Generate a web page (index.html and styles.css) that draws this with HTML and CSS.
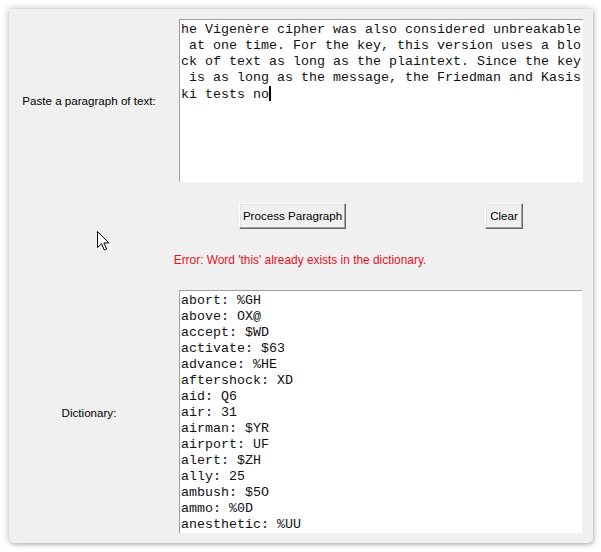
FILE: index.html
```html
<!DOCTYPE html>
<html>
<head>
<meta charset="utf-8">
<link rel="stylesheet" href="styles.css">
</head>
<body>
<div class="window">
  <div class="label label-para">Paste a paragraph of text:</div>
  <div class="textbox para"><div class="line">he Vigenère cipher was also considered unbreakable</div><div class="line"> at one time. For the key, this version uses a blo</div><div class="line">ck of text as long as the plaintext. Since the key</div><div class="line"> is as long as the message, the Friedman and Kasis</div><div class="line">ki tests no<span class="caret"></span></div></div>
  <div class="buttons">
    <button class="btn btn-process">Process Paragraph</button>
    <button class="btn btn-clear">Clear</button>
  </div>
  <div class="error">Error: Word 'this' already exists in the dictionary.</div>
  <div class="label label-dict">Dictionary:</div>
  <div class="textbox dict"><div class="line">abort: %GH</div><div class="line">above: OX@</div><div class="line">accept: $WD</div><div class="line">activate: $63</div><div class="line">advance: %HE</div><div class="line">aftershock: XD</div><div class="line">aid: Q6</div><div class="line">air: 31</div><div class="line">airman: $YR</div><div class="line">airport: UF</div><div class="line">alert: $ZH</div><div class="line">ally: 25</div><div class="line">ambush: $5O</div><div class="line">ammo: %0D</div><div class="line">anesthetic: %UU</div></div>
  <svg class="pointer" width="13" height="20" viewBox="0 0 13 20"><path d="M0.5 0.5 L0.5 16.5 L4.5 12.8 L7.3 19 L9.6 18 L6.9 11.9 L11.8 11.9 Z" fill="#fff" stroke="#000" stroke-width="1" stroke-linejoin="miter"/></svg>
</div>
</body>
</html>
```
FILE: styles.css
```css
html, body {
  margin: 0;
  padding: 0;
  background: #ffffff;
}
body {
  width: 601px;
  height: 552px;
  overflow: hidden;
}
.window {
  position: relative;
  margin: 9px 0 0 9px;
  width: 584px;
  height: 534px;
  box-sizing: border-box;
  background: #f0f0f0;
  border-radius: 0 0 5px 5px;
  box-shadow: 0 0 7px rgba(0, 0, 0, 0.28), 1px 2px 3px rgba(0, 0, 0, 0.12);
  display: grid;
  grid-template-columns: 160px 404px;
  column-gap: 10px;
  grid-template-rows: 163px auto auto 243px;
  align-content: start;
  padding-top: 10px;
  overflow: hidden;
  font-family: "Liberation Sans", Arial, sans-serif;
  font-size: 11.6px;
  color: #000;
}
.label {
  display: flex;
  align-items: center;
  justify-content: center;
  white-space: nowrap;
}
.label-dict {
  grid-row: 4;
  grid-column: 1;
  padding-top: 2px;
}
.textbox {
  background: #ffffff;
  border-top: 1px solid #a0a0a0;
  border-left: 1px solid #a0a0a0;
  box-sizing: border-box;
  font-family: "Liberation Mono", "Courier New", monospace;
  font-size: 13.333px;
  line-height: 16px;
  white-space: pre;
  overflow: hidden;
  color: #111;
}
.para {
  padding: 2px 0 0 1px;
}
.dict {
  grid-row: 4;
  grid-column: 2;
  width: 403px;
  padding: 2px 0 0 1px;
}
.line {
  height: 16px;
}
.caret {
  display: inline-block;
  width: 2px;
  height: 15px;
  background: #000;
  vertical-align: -3px;
}
.buttons {
  grid-column: 2;
  grid-row: 2;
  display: flex;
  align-items: flex-start;
  padding: 21px 0 0 60px;
  gap: 139px;
}
.btn {
  height: 26px;
  box-sizing: border-box;
  margin: 0;
  padding: 0 0 1px 0;
  background: #f0f0f0;
  border: 1px solid;
  border-color: #ffffff #696969 #696969 #ffffff;
  box-shadow: inset -1px -1px 0 #a0a0a0, inset 1px 1px 0 #e3e3e3;
  font-family: "Liberation Sans", Arial, sans-serif;
  font-size: 11.6px;
  color: #000;
  border-radius: 0;
}
.btn-process {
  width: 107px;
}
.btn-clear {
  width: 38px;
}
.error {
  grid-column: 1 / 3;
  grid-row: 3;
  text-align: center;
  color: #e8101c;
  font-size: 11.9px;
  line-height: 16px;
  padding: 23px 0 22px 8px;
}
.pointer {
  position: absolute;
  left: 88px;
  top: 222px;
}
```
